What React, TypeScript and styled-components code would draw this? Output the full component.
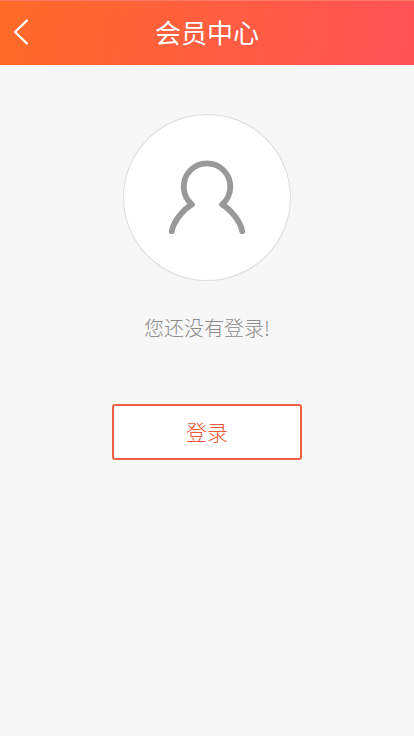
import React from "react";
import styled, { createGlobalStyle } from "styled-components";

const GlobalStyle = createGlobalStyle`
  *, *::before, *::after {
    box-sizing: border-box;
  }
  body {
    margin: 0;
    background: #f7f7f7;
    font-family: "Noto Sans CJK SC", sans-serif;
    font-weight: 300;
  }
`;

const Page = styled.div`
  display: flex;
  flex-direction: column;
  min-height: 100vh;
`;

const Header = styled.header`
  display: grid;
  grid-template-columns: 42px 1fr 42px;
  align-items: center;
  height: 65px;
  padding-bottom: 2px;
  border-top: 1px solid #ff7b66;
  background: linear-gradient(100deg, #ff6a28, #ff5257) border-box;
  color: #fff;
`;

const BackLink = styled.a`
  display: flex;
  justify-content: center;
  align-items: center;
  height: 60px;
  color: inherit;
`;

const Title = styled.h1`
  margin: 0;
  font-size: 26px;
  line-height: 40px;
  font-weight: 400;
  text-align: center;
`;

const Main = styled.main`
  display: flex;
  flex-direction: column;
  align-items: center;
  padding: 49px 16px 32px;
`;

const Avatar = styled.div`
  display: flex;
  justify-content: center;
  align-items: center;
  width: 168px;
  height: 167px;
  border: 1px solid #dcdcdc;
  border-radius: 50%;
  background: #fff;
`;

const Message = styled.p`
  margin: 32px 0 61px;
  color: #8c8c8c;
  font-size: 20px;
  line-height: 30px;
`;

const LoginButton = styled.button`
  width: 190px;
  height: 56px;
  padding: 0 0 2px;
  border: 2px solid #f0603f;
  border-radius: 3px;
  background: #fff;
  color: #ee5838;
  font: inherit;
  font-size: 21px;
  line-height: 32px;
  cursor: pointer;
`;

function BackIcon() {
  return (
    <svg width="18" height="28" viewBox="0 0 18 28" fill="none" aria-hidden="true">
      <path
        d="M15 2.5 3 14 15 25.5"
        stroke="currentColor"
        strokeWidth="2.3"
        strokeLinecap="round"
        strokeLinejoin="round"
      />
    </svg>
  );
}

function PersonIcon() {
  return (
    <svg width="84" height="84" viewBox="0 0 84 84" fill="none" aria-hidden="true">
      <path
        d="M6.8 75.2C8.2 67 16.5 54.6 26.9 48.4A23.3 23.3 0 1 1 57.1 48.4C67.5 54.6 75.8 67 77.2 75.2"
        stroke="#999"
        strokeWidth="5.8"
        strokeLinecap="round"
        strokeLinejoin="round"
      />
    </svg>
  );
}

export default function App() {
  return (
    <Page>
      <GlobalStyle />
      <Header>
        <BackLink href="#" aria-label="返回">
          <BackIcon />
        </BackLink>
        <Title>会员中心</Title>
      </Header>
      <Main>
        <Avatar>
          <PersonIcon />
        </Avatar>
        <Message>您还没有登录!</Message>
        <LoginButton type="button">登录</LoginButton>
      </Main>
    </Page>
  );
}
